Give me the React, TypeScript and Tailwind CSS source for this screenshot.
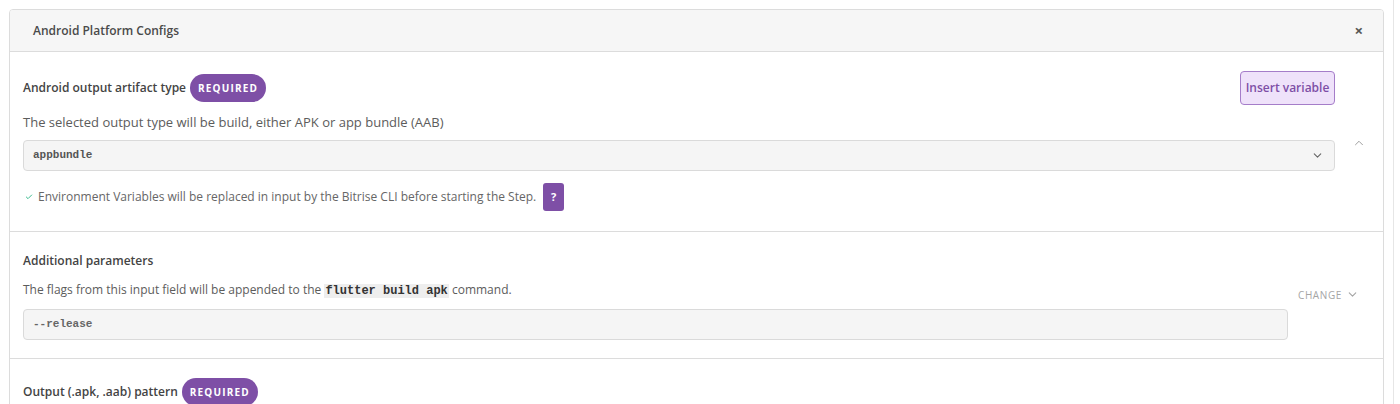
import { ChevronDown, ChevronUp, Check } from "lucide-react";

function RequiredBadge() {
    return (
        <span className="ml-[4px] inline-flex items-center justify-center h-[28px] w-[76px] rounded-full bg-[#7e4fa6] text-white text-[10px] font-bold tracking-[1.2px]">
            REQUIRED
        </span>
    );
}

function App() {
    return (
        <div className="relative w-[1400px] h-[404px] overflow-hidden bg-white font-['Open_Sans',sans-serif] text-[12px]">
            <div className="absolute left-[1393px] top-0 h-full w-px bg-[#e6e6e6]" />
            <div className="ml-[9px] mt-[9px] w-[1375px] border border-[#dcdcdc] rounded-[4px] overflow-hidden">
                {/* header */}
                <div className="h-[42px] bg-[#f6f6f6] border-b border-[#dcdcdc] flex items-center justify-between pl-[23px] pr-[20px]">
                    <span className="font-semibold text-[12px] text-[#4a4a4a]">Android Platform Configs</span>
                    <span className="text-[#555] text-[15px] font-bold leading-none">×</span>
                </div>

                {/* section 1 */}
                <div className="flex border-b border-[#dcdcdc]">
                    <div className="flex-1 pl-[13px] pt-[19px] pb-[20px]">
                        <div className="flex items-center justify-between h-[34px]">
                            <div className="flex items-center">
                                <span className="font-semibold text-[#444]">Android output artifact type</span>
                                <RequiredBadge />
                            </div>
                            <button className="h-[34px] w-[95px] rounded-[4px] border border-[#a57dc9] bg-[#efe2fa] text-[#7e4fa6] font-semibold text-[12px]">
                                Insert variable
                            </button>
                        </div>
                        <p className="mt-[9px] leading-[16px] text-[13px] text-[#5c5c5c]">
                            The selected output type will be build, either APK or app bundle (AAB)
                        </p>
                        <div className="mt-[10px] h-[31px] rounded-[4px] border border-[#dadada] bg-[#f5f5f5] flex items-center justify-between pl-[9px] pr-[10px]">
                            <span className="font-['Liberation_Mono',monospace] text-[11px] font-bold text-[#555]">appbundle</span>
                            <ChevronDown size={13} strokeWidth={2} className="text-[#666]" />
                        </div>
                        <div className="mt-[12px] h-[28px] flex items-center">
                            <Check size={8} strokeWidth={3} className="ml-[2px] text-[#3dbb8f]" />
                            <span className="ml-[5px] text-[#666]">
                                Environment Variables will be replaced in input by the Bitrise CLI before starting the Step.
                            </span>
                            <span className="ml-[7px] h-[28px] w-[21px] rounded-[3px] bg-[#7e4fa6] text-white font-bold text-[11px] flex items-center justify-center">
                                ?
                            </span>
                        </div>
                    </div>
                    <div className="w-[48px] flex justify-center pt-[84px]">
                        <ChevronUp size={14} strokeWidth={1.6} className="text-[#999]" />
                    </div>
                </div>

                {/* section 2 */}
                <div className="flex border-b border-[#dcdcdc]">
                    <div className="flex-1 pl-[13px] pt-[21px] pb-[18px]">
                        <div className="leading-[16px] font-semibold text-[#444]">Additional parameters</div>
                        <p className="mt-[13px] leading-[16px] text-[#5c5c5c]">
                            The flags from this input field will be appended to the{" "}
                            <code className="font-['Liberation_Mono',monospace] text-[12px] font-bold text-[#333] bg-[#eeeeee] px-[1px]">flutter build apk</code>{" "}
                            command.
                        </p>
                        <div className="mt-[10px] h-[31px] rounded-[4px] border border-[#dadada] bg-[#f5f5f5] flex items-center pl-[9px]">
                            <span className="font-['Liberation_Mono',monospace] text-[11px] font-bold text-[#666]">--release</span>
                        </div>
                    </div>
                    <div className="w-[95px] pl-[10px] pt-[56px] flex items-start">
                        <span className="text-[10px] tracking-[0.6px] text-[#a5a5a5] leading-[14px]">CHANGE</span>
                        <ChevronDown size={13} strokeWidth={2} className="ml-[4px] text-[#a5a5a5]" />
                    </div>
                </div>

                {/* section 3 */}
                <div className="pl-[13px] pt-[19px] pb-[20px]">
                    <div className="flex items-center h-[28px]">
                        <span className="font-semibold text-[#444]">Output (.apk, .aab) pattern</span>
                        <RequiredBadge />
                    </div>
                </div>
            </div>
        </div>
    );
}

export default App;
